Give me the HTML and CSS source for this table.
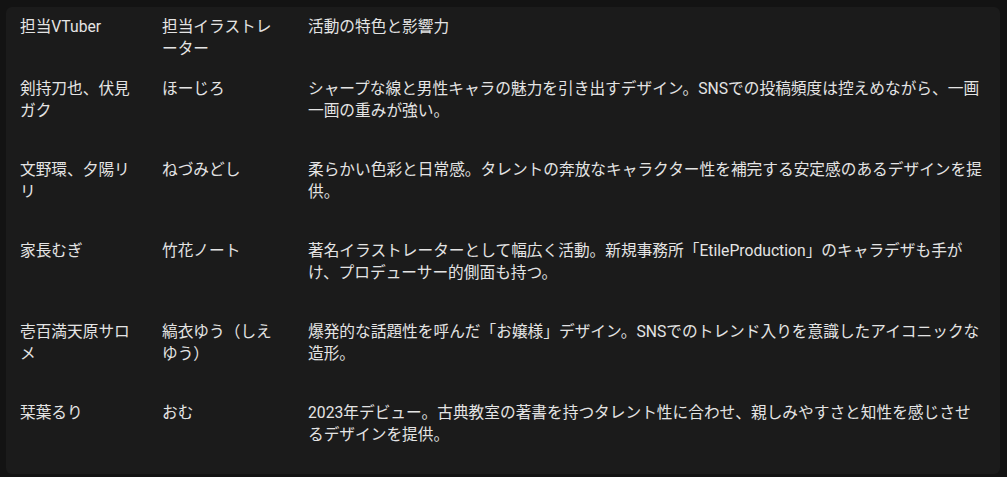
FILE: index.html
```html
<!DOCTYPE html>
<html lang="ja">
<head>
<meta charset="utf-8">
<title>VTuber と担当イラストレーター</title>
<link rel="stylesheet" href="styles.css">
</head>
<body>
<div class="card">
  <table class="grid">
    <colgroup>
      <col class="c1"><col class="c2"><col class="c3">
    </colgroup>
    <thead>
      <tr><th>担当VTuber</th><th>担当イラストレーター</th><th class="desc">活動の特色と影響力</th></tr>
    </thead>
    <tbody>
      <tr><td>剣持刀也、伏見ガク</td><td>ほーじろ</td><td class="desc">シャープな線と男性キャラの魅力を引き出すデザイン。SNSでの投稿頻度は控えめながら、一画一画の重みが強い。</td></tr>
      <tr><td>文野環、夕陽リリ</td><td>ねづみどし</td><td class="desc">柔らかい色彩と日常感。タレントの奔放なキャラクター性を補完する安定感のあるデザインを提供。</td></tr>
      <tr><td>家長むぎ</td><td>竹花ノート</td><td class="desc">著名イラストレーターとして幅広く活動。新規事務所「EtileProduction」のキャラデザも手がけ、プロデューサー的側面も持つ。</td></tr>
      <tr><td>壱百満天原サロメ</td><td>縞衣ゆう（しえゆう）</td><td class="desc">爆発的な話題性を呼んだ「お嬢様」デザイン。SNSでのトレンド入りを意識したアイコニックな造形。</td></tr>
      <tr><td>栞葉るり</td><td>おむ</td><td class="desc">2023年デビュー。古典教室の著書を持つタレント性に合わせ、親しみやすさと知性を感じさせるデザインを提供。</td></tr>
    </tbody>
  </table>
</div>
</body>
</html>
```

FILE: styles.css
```css
html, body {
  margin: 0;
  background: #131313;
}
body {
  padding: 7px 7px 0 6px;
  font-family: Roboto, "Noto Sans CJK JP", sans-serif;
  font-size: 15.7px;
  line-height: 22px;
  color: #e4e4e4;
}
.card {
  background: #1b1b1b;
  border-radius: 6px;
  overflow: hidden;
}
.grid {
  width: 100%;
  border-collapse: collapse;
  table-layout: fixed;
}
.c1 { width: 142px; }
.c2 { width: 146px; }
.grid th {
  font-weight: 400;
  text-align: left;
  vertical-align: top;
  padding: 9px 14px;
}
.grid td {
  vertical-align: top;
  padding: 9px 14px 28px;
}
.grid .desc {
  padding-right: 16px;
}
```
